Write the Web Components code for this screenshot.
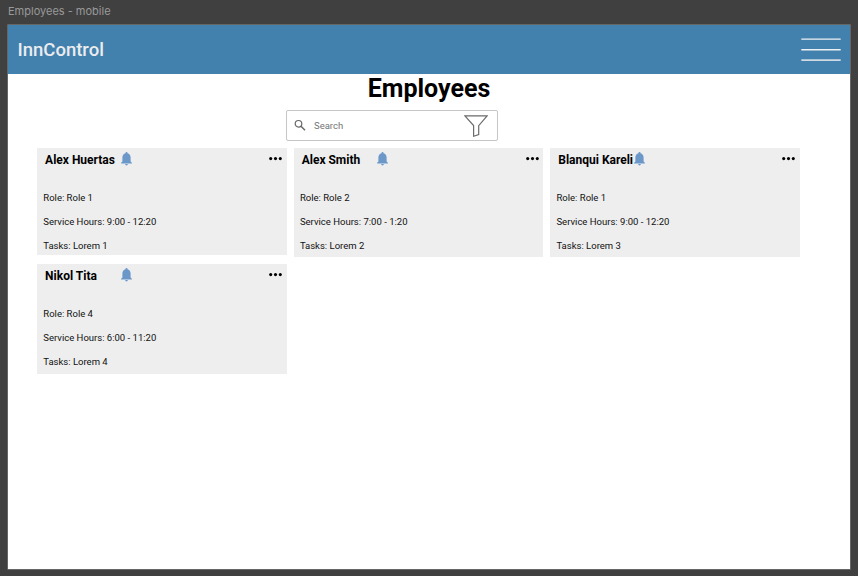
<!DOCTYPE html>
<html lang="en">
<head>
<meta charset="utf-8">
<title>InnControl – Employees</title>
<style>
html,body{margin:0;height:100%;overflow:hidden;background:#404040;font-family:Roboto,"Liberation Sans",sans-serif}
</style>
</head>
<body>
<employees-page></employees-page>
<script>
const define = (name, html) => {
  const t = document.createElement('template');
  t.innerHTML = html;
  customElements.define(name, class extends HTMLElement {
    constructor() {
      super();
      this.attachShadow({mode: 'open'}).append(t.content.cloneNode(true));
    }
  });
};

define('menu-icon', `<style>:host{display:block;width:40px;height:24px}svg{display:block}</style>
<svg width="40" height="24" stroke="#eef1f4" stroke-width="1.4"><path d="M.3 1.100H39.7M.3 11.700H39.7"/><path d="M.3 22.100H39.7" stroke-width="1.7" stroke="#cfdae5"/></svg>`);

define('bell-icon', `<style>:host{display:block;width:11px;height:14px}svg{display:block}</style>
<svg width="11" height="14" viewBox="0 0 11 14" fill="#6b97c9"><path d="M5.500 0C4.900 0 4.500.4 4.500.9v.4C2.600 1.800 1.400 3.500 1.400 5.500v4L.1 10.700v.8h10.800v-.8L9.600 9.500v-4c0-2-1.200-3.700-3.100-4.200v-.4C6.500.4 6.100 0 5.500 0zM4.200 12c0 .8.500 1.400 1.300 1.400s1.300-.6 1.300-1.400z"/></svg>`);

define('more-icon', `<style>:host{display:block;width:13px;height:4px}svg{display:block}</style>
<svg width="13" height="4"><circle cx="1.700" cy="1.600" r="1.550"/><circle cx="6.500" cy="1.600" r="1.550"/><circle cx="11.300" cy="1.600" r="1.550"/></svg>`);

define('app-header', `<style>
:host{display:flex;box-sizing:border-box;height:48.500px;padding:0 9.500px 0 9.500px;align-items:center;justify-content:space-between;background:#4280ad;color:#ececee}
b{font-weight:500;font-size:18.500px;line-height:24px}
</style><b><slot></slot></b><menu-icon></menu-icon>`);

define('search-box', `<style>
:host{display:flex;box-sizing:border-box;width:212px;height:31px;border:1px solid #c6c6c6;border-radius:2px;background:#fff;align-items:center;padding:0 9.500px 0 7px}
span{flex:1;margin-left:8px;font-size:9.500px;color:#757575}
svg{display:block}
.filter{margin-top:2px}
</style>
<svg width="12" height="12" viewBox="0 0 12 12" fill="none" stroke="#666"><circle cx="4.500" cy="4.800" r="3.300" stroke-width="1.200"/><path d="M7 7.300L11 11.300" stroke-width="1.500"/></svg>
<span><slot></slot></span>
<svg class="filter" width="24" height="22" viewBox="0 0 24 22" fill="none" stroke="#6b6b6b" stroke-width="1.200"><path d="M.9.9H23.100L14.700 10.600V19.500L9.600 21.200V10.600Z"/></svg>`);

define('employee-card', `<style>
:host{display:block;box-sizing:border-box;height:109.500px;background:#eee;color:#000;padding:4px 4.500px 0 6.300px}
header{display:grid;grid-template-columns:75.700px 1fr 13px;height:16px;padding-left:1.800px;font-size:12px;font-weight:700;line-height:16px;white-space:nowrap}
header slot{display:block}
.meta{margin-top:18px;font-size:9.530px;line-height:24px;color:#111}
.meta ::slotted(div){height:24px}
more-icon{margin-top:5px}
</style>
<header><slot name="name"></slot><bell-icon></bell-icon><more-icon></more-icon></header>
<div class="meta"><slot></slot></div>`);

define('employees-page', `<style>
:host{display:block;padding:5px 8px 0}
.label{height:20.300px;font:11px/13px Inter,sans-serif;color:#999}
main{box-sizing:border-box;height:544px;background:#fff;box-shadow:0 0 0 .7px #777}
h1{margin:0;height:36px;font-size:25px;line-height:29px;text-align:center;font-weight:700;color:#000}
search-box{margin-left:278px}
.grid{display:grid;grid-template-columns:repeat(3,249.700px);column-gap:6.900px;row-gap:7px;padding:7px 0 0 29px}
.short{height:107.500px}
</style>
<div class="label">Employees - mobile</div>
<main>
<app-header>InnControl</app-header>
<h1>Employees</h1>
<search-box>Search</search-box>
<div class="grid">
<employee-card class="short"><span slot="name">Alex Huertas</span><div>Role: Role 1</div><div>Service Hours: 9:00 - 12:20</div><div>Tasks: Lorem 1</div></employee-card>
<employee-card><span slot="name">Alex Smith</span><div>Role: Role 2</div><div>Service Hours: 7:00 - 1:20</div><div>Tasks: Lorem 2</div></employee-card>
<employee-card><span slot="name">Blanqui Kareli</span><div>Role: Role 1</div><div>Service Hours: 9:00 - 12:20</div><div>Tasks: Lorem 3</div></employee-card>
<employee-card><span slot="name">Nikol Tita</span><div>Role: Role 4</div><div>Service Hours: 6:00 - 11:20</div><div>Tasks: Lorem 4</div></employee-card>
</div>
</main>`);
</script>
</body>
</html>
